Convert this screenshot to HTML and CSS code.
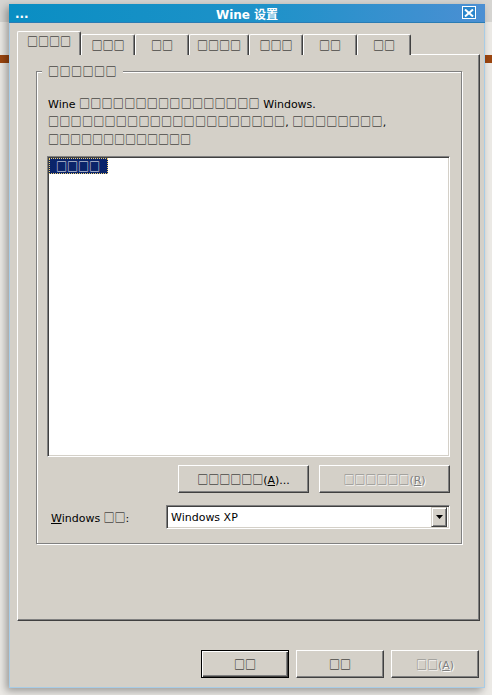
FILE: index.html
```html
<!DOCTYPE html>
<html lang="zh">
<head>
    <meta charset="UTF-8">
    <title>Wine 设置</title>
    <link rel="stylesheet" href="styles.css">
</head>
<body>
    <div class="desk">
        <div class="desk-top"></div>
        <div class="desk-bar"></div>

        <div class="window">
            <div class="titlebar">
                <span class="sysicon">...</span>
                <span class="title">Wine 设置</span>
                <span class="close">
                    <svg width="10" height="8" viewBox="0 0 10 8"><path d="M1 0.5 L9 7.5 M9 0.5 L1 7.5" stroke="#fff" stroke-width="2"/></svg>
                </span>
            </div>

            <div class="client">
                <div class="tabs">
                    <div class="tab active"><span class="tf">□□□□</span></div>
                    <div class="tab"><span class="tf">□□□</span></div>
                    <div class="tab"><span class="tf">□□</span></div>
                    <div class="tab"><span class="tf">□□□□</span></div>
                    <div class="tab"><span class="tf">□□□</span></div>
                    <div class="tab"><span class="tf">□□</span></div>
                    <div class="tab"><span class="tf">□□</span></div>
                </div>

                <div class="panel">
                    <div class="group">
                        <span class="group-label"><span class="tf">□□□□□□</span></span>
                        <p class="desc">Wine <span class="tf wide">□□□□□□□□□□□□□□□□</span> Windows.<br><span class="tf wide">□□□□□□□□□□□□□□□□□□□□□</span>, <span class="tf wide">□□□□□□□□</span>,<br><span class="tf">□□□□□□□□□□□□□</span></p>

                        <div class="listbox">
                            <span class="item selected"><span class="tf">□□□□</span></span>
                        </div>

                        <div class="btn-row">
                            <button class="btn wide"><span class="tf">□□□□□□</span>(<u>A</u>)...</button>
                            <button class="btn wide" disabled><span class="tf">□□□□□□</span>(<u>R</u>)</button>
                        </div>

                        <div class="ver-row">
                            <label class="ver-label"><u>W</u>indows <span class="tf">□□</span>:</label>
                            <div class="combo">
                                <span class="combo-text">Windows XP</span>
                                <span class="combo-arrow">
                                    <svg width="7" height="4" viewBox="0 0 7 4"><path d="M0 0 H7 L3.5 4 Z" fill="#000"/></svg>
                                </span>
                            </div>
                        </div>
                    </div>
                </div>

                <div class="footer">
                    <button class="btn default"><span class="tf">□□</span></button>
                    <button class="btn"><span class="tf">□□</span></button>
                    <button class="btn" disabled><span class="tf">□□</span>(<u>A</u>)</button>
                </div>
            </div>
        </div>
    </div>
</body>
</html>
```

FILE: styles.css
```css
body {
    margin: 0;
    background: #eceae6;
    font-family: "DejaVu Sans", "Noto Sans CJK SC", sans-serif;
    font-size: 11px;
    color: #000;
    overflow: hidden;
}
.tf {
    font-family: "Noto Sans CJK SC", sans-serif;
    font-size: 11px;
}
.tf.wide {
    letter-spacing: 0.3px;
}
.desk {
    position: relative;
    height: 695px;
    padding: 4px 0 0 9px;
    box-sizing: border-box;
}
.desk-top {
    position: absolute;
    left: 0;
    right: 0;
    top: 0;
    height: 22px;
    background: #d6d5d2;
}
.desk-bar {
    position: absolute;
    left: 0;
    right: 0;
    top: 55px;
    height: 8px;
    background: #9c4610;
}
.window {
    position: relative;
    width: 476px;
    height: 684px;
    box-sizing: border-box;
    border: 1px solid #a8cce6;
    border-top: 0;
    background: #d4d0c8;
    box-shadow: -3px 3px 8px rgba(0,0,0,0.35);
    display: flex;
    flex-direction: column;
}
.titlebar {
    height: 19px;
    margin: 0 -1px;
    background: linear-gradient(90deg, #0a8ec3 0%, #1f92c9 55%, #4b8fd3 100%);
    border-bottom: 1px solid #2a7cb4;
    box-sizing: border-box;
    display: flex;
    align-items: center;
    position: relative;
    color: #fff;
}
.sysicon {
    position: absolute;
    left: 6px;
    top: 3px;
    font-weight: bold;
    font-size: 12px;
}
.title {
    flex: 1;
    text-align: center;
    font-weight: bold;
    font-size: 12px;
}
.close {
    position: absolute;
    right: 9px;
    top: 2px;
    width: 14px;
    height: 13px;
    box-sizing: border-box;
    border: 1px solid #fff;
    display: flex;
    align-items: center;
    justify-content: center;
    background: #2a86cc;
}
.client {
    flex: 1;
    display: flex;
    flex-direction: column;
    padding: 9px 4px 0 7px;
}
.tabs {
    display: flex;
    align-items: flex-end;
    height: 23px;
    position: relative;
    z-index: 1;
    margin-bottom: -1px;
}
.tab {
    height: 21px;
    min-width: 54px;
    padding: 0 7px;
    box-sizing: border-box;
    border-top: 1px solid #fff;
    border-left: 1px solid #fff;
    border-right: 1px solid #404040;
    box-shadow: inset -1px 0 0 #808080;
    border-radius: 2px 2px 0 0;
    text-align: center;
    line-height: 20px;
    background: #d4d0c8;
}
.tab.active {
    height: 24px;
    padding: 0 9px;
    line-height: 19px;
}
.panel {
    height: 567px;
    width: 463px;
    box-sizing: border-box;
    border-top: 1px solid #fff;
    border-left: 1px solid #fff;
    border-right: 1px solid #404040;
    border-bottom: 1px solid #404040;
    box-shadow: inset -1px -1px 0 #808080;
    padding: 16px 17px 0 18px;
}
.group {
    position: relative;
    height: 473px;
    box-sizing: border-box;
    border: 1px solid #808080;
    box-shadow: inset 1px 1px 0 #fff, 1px 1px 0 #fff;
    padding: 23px 11px 0 10px;
}
.group-label {
    position: absolute;
    left: 5px;
    top: -8px;
    padding: 0 6px;
    background: #d4d0c8;
    line-height: 15px;
    letter-spacing: 0.5px;
}
.desc {
    margin: 0 0 0 1px;
    line-height: 16px;
    height: 48px;
}
.listbox {
    margin-top: 13px;
    height: 301px;
    box-sizing: border-box;
    background: #fff;
    border-top: 1px solid #808080;
    border-left: 1px solid #808080;
    border-right: 1px solid #fff;
    border-bottom: 1px solid #fff;
    box-shadow: inset 1px 1px 0 #404040, inset -1px -1px 0 #d4d0c8;
    padding: 1px;
}
.item {
    display: inline-block;
    height: 16px;
    line-height: 16px;
    padding: 0 8px 0 7px;
}
.item.selected {
    background: #0a246a;
    color: #fff;
    outline: 1px dotted #f0d070;
    outline-offset: -1px;
}
.btn-row {
    display: flex;
    justify-content: flex-end;
    gap: 10px;
    margin-top: 8px;
}
.btn {
    font: inherit;
    color: #000;
    background: #d4d0c8;
    height: 28px;
    width: 88px;
    padding: 0;
    box-sizing: border-box;
    border-top: 1px solid #fff;
    border-left: 1px solid #fff;
    border-right: 1px solid #404040;
    border-bottom: 1px solid #404040;
    box-shadow: inset -1px -1px 0 #808080;
}
.btn.wide {
    width: 131px;
}
.btn[disabled] {
    color: #808080;
    text-shadow: 1px 1px 0 #fff;
}
.btn.default {
    border: 1px solid #000;
    box-shadow: inset 1px 1px 0 #fff, inset -1px -1px 0 #404040, inset -2px -2px 0 #808080;
}
.ver-row {
    display: flex;
    align-items: center;
    margin-top: 12px;
}
.ver-label {
    width: 119px;
    padding-left: 4px;
    box-sizing: border-box;
}
.combo {
    width: 284px;
    height: 24px;
    box-sizing: border-box;
    background: #fff;
    border-top: 1px solid #808080;
    border-left: 1px solid #808080;
    border-right: 1px solid #fff;
    border-bottom: 1px solid #fff;
    box-shadow: inset 1px 1px 0 #404040, inset -1px -1px 0 #d4d0c8;
    display: flex;
    align-items: center;
    padding: 2px;
}
.combo-text {
    flex: 1;
    padding-left: 2px;
}
.combo-arrow {
    width: 16px;
    height: 20px;
    box-sizing: border-box;
    background: #d4d0c8;
    border-top: 1px solid #d4d0c8;
    border-left: 1px solid #d4d0c8;
    border-right: 1px solid #404040;
    border-bottom: 1px solid #404040;
    box-shadow: inset 1px 1px 0 #fff, inset -1px -1px 0 #808080;
    display: flex;
    align-items: center;
    justify-content: center;
}
.footer {
    display: flex;
    justify-content: flex-end;
    gap: 7px;
    margin-top: 29px;
    padding-right: 1px;
}
```
